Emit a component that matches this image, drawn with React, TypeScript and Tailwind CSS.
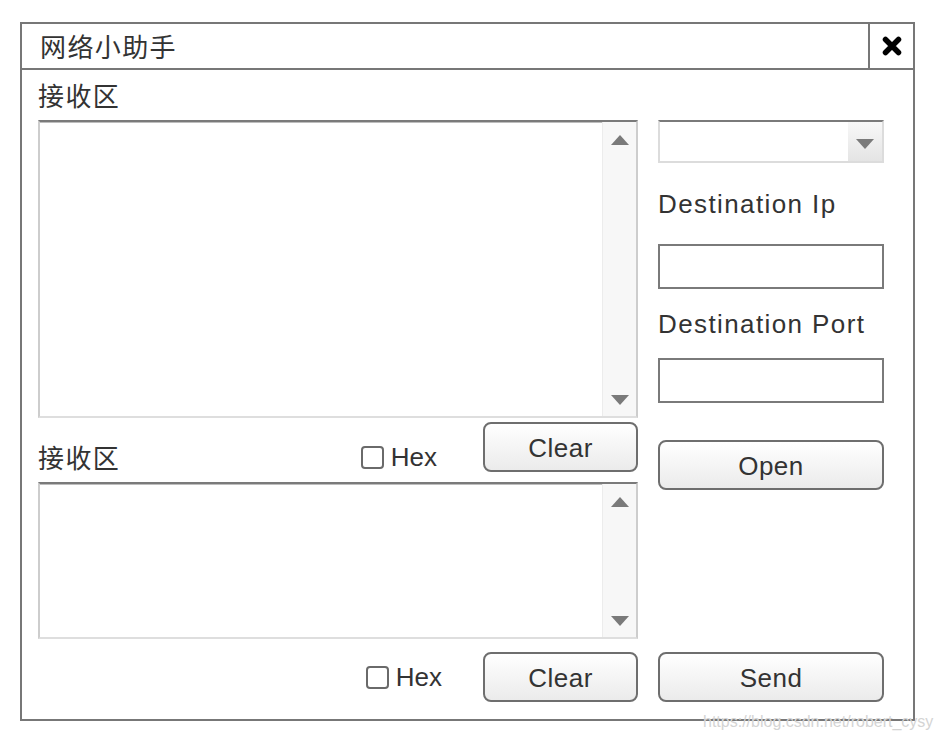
import React from "react";

const font = "font-['Liberation_Sans','Noto_Sans_CJK_SC',sans-serif]";

function Triangle({ up }: { up?: boolean }) {
  return up ? (
    <div className="h-0 w-0 border-x-[9px] border-b-[10px] border-x-transparent border-b-[#7a7a7a]" />
  ) : (
    <div className="h-0 w-0 border-x-[9px] border-t-[10px] border-x-transparent border-t-[#7a7a7a]" />
  );
}

function TextBox({ height }: { height: string }) {
  return (
    <div
      className={`flex ${height} border-2 border-x-[#cdcdcd] border-t-[#7a7a7a] border-b-[#dedede] bg-white shadow-[inset_0_1px_0_#bdbdbd]`}
    >
      <textarea className="flex-1 resize-none bg-transparent outline-none" />
      <div className="flex w-[34px] flex-col items-center justify-between border-l border-[#ececec] bg-[#f7f7f7] pt-[13px] pb-[11px]">
        <Triangle up />
        <Triangle />
      </div>
    </div>
  );
}

function Button({ label, className = "" }: { label: string; className?: string }) {
  return (
    <button
      className={`h-[50px] rounded-[8px] border-2 border-[#6e6e6e] bg-linear-to-b from-white to-[#ebebeb] pt-[3px] text-[26px] tracking-[0.5px] text-[#333] ${className}`}
    >
      {label}
    </button>
  );
}

function Hex() {
  return (
    <label className="flex h-[30px] items-center gap-[7px]">
      <span className="h-[23px] w-[23px] rounded-[4px] border-2 border-[#6a6a6a] bg-white" />
      <span className="text-[26px] leading-[30px] tracking-[0px]">Hex</span>
    </label>
  );
}

export default function App() {
  return (
    <div className={`relative h-[742px] w-[940px] overflow-hidden bg-white text-[#333] ${font} tracking-[1.4px]`}>
      <div className="ml-[20px] mt-[22px] flex h-[699px] w-[895px] flex-col border-2 border-[#777]">
        {/* title bar */}
        <div className="flex h-[46px] shrink-0 border-b-2 border-[#777]">
          <div className="flex flex-1 items-center pl-[18px] pt-[4px] text-[26px]">网络小助手</div>
          <div className="flex w-[45px] items-center justify-center border-l-2 border-[#777]">
            <svg width="22" height="20" viewBox="0 0 22 20">
              <path d="M4.5 3.5 L17.5 16.5 M17.5 3.5 L4.5 16.5" stroke="#000" strokeWidth="5.5" strokeLinecap="round" />
            </svg>
          </div>
        </div>

        <div className="flex flex-1 gap-[20px] px-[16px]">
          {/* left column */}
          <div className="flex w-[600px] flex-col">
            <div className="flex h-[50px] items-center pt-[4px] text-[26px]">接收区</div>
            <TextBox height="h-[298px]" />
            <div className="flex h-[64px] items-start">
              <div className="mt-[26px] text-[26px] leading-[30px]">接收区</div>
              <div className="ml-auto mt-[24px]">
                <Hex />
              </div>
              <Button label="Clear" className="ml-[46px] mt-[4px] w-[155px]" />
            </div>
            <TextBox height="h-[157px]" />
            <div className="mt-[13px] flex h-[50px] items-center justify-end">
              <Hex />
              <Button label="Clear" className="ml-[41px] w-[155px]" />
            </div>
          </div>

          {/* right column */}
          <div className="flex w-[226px] flex-col pt-[50px] pb-[17px]">
            <div className="flex h-[43px] border-2 border-x-[#dcdcdc] border-t-[#7a7a7a] border-b-[#dcdcdc] bg-white">
              <div className="flex-1" />
              <div className="flex w-[34px] items-center justify-center bg-linear-to-b from-[#f8f8f8] to-[#e4e4e4] pt-[4px]">
                <Triangle />
              </div>
            </div>
            <div className="flex h-[81px] items-center pt-[2px] text-[26px]">Destination Ip</div>
            <input className="h-[45px] border-2 border-[#7a7a7a] bg-white outline-none" />
            <div className="flex h-[69px] items-center pt-[2px] text-[26px]">Destination Port</div>
            <input className="h-[45px] border-2 border-[#7a7a7a] bg-white outline-none" />
            <Button label="Open" className="mt-[37px] w-full" />
            <Button label="Send" className="mt-auto w-full" />
          </div>
        </div>
      </div>

      <div className="absolute left-[703px] top-[710px] font-['Liberation_Sans',sans-serif] text-[16px] tracking-[0px] text-[#d4d4d4]">
        https://blog.csdn.net/robert_cysy
      </div>
    </div>
  );
}
